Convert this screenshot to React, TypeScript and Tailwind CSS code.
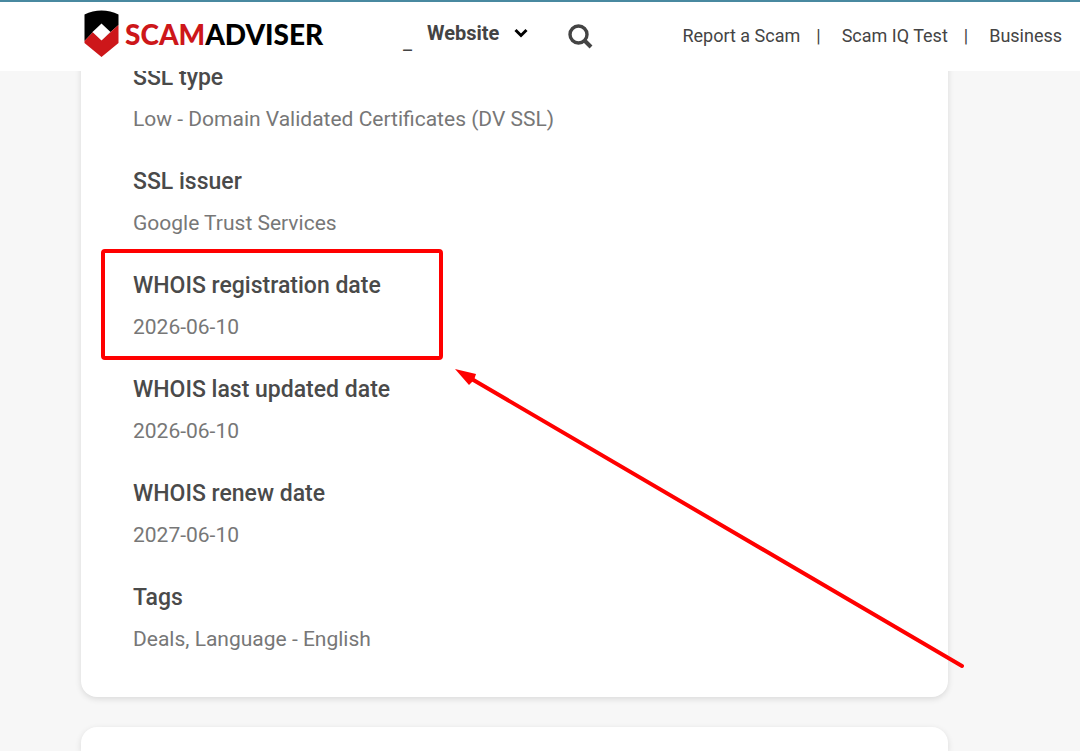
type Detail = { label: string; value: string; highlighted?: boolean };

const DETAILS: Detail[] = [
  { label: 'SSL type', value: 'Low - Domain Validated Certificates (DV SSL)' },
  { label: 'SSL issuer', value: 'Google Trust Services' },
  { label: 'WHOIS registration date', value: '2026-06-10', highlighted: true },
  { label: 'WHOIS last updated date', value: '2026-06-10' },
  { label: 'WHOIS renew date', value: '2027-06-10' },
  { label: 'Tags', value: 'Deals, Language - English' },
];

const LINKS = ['Report a Scam', 'Scam IQ Test', 'Business'];

function Logo() {
  return (
    <a href="#" className="flex shrink-0 items-center gap-1.5">
      <svg width="35" height="47" viewBox="0 0 35 47" aria-hidden="true">
        <path d="M0.5 4.5C11 -1 24 -1 34.5 4.5V15L17.5 30L9 22L0.5 31Z" fill="#000" />
        <path d="M0.5 31L9 22L17.5 30L34.5 15V33L17.5 47L0.5 33Z" fill="#cd171a" />
        <path d="M17.5 13.5L26.5 22L17.5 30.5L8.5 22Z" fill="#fff" />
      </svg>
      <span className="font-[Lato,sans-serif] text-[28px] leading-8 font-black text-black">
        <span className="text-[#cd171a]">SCAM</span>ADVISER
      </span>
    </a>
  );
}

function Header() {
  return (
    <header className="relative z-10 flex h-[71px] items-start overflow-hidden border-t-2 border-[#4889a0] bg-white pl-[84px] text-[#444]">
      <div className="flex w-[319px] shrink-0 pt-2">
        <Logo />
      </div>
      <span className="w-6 shrink-0 pt-[26px] text-xl leading-7">_</span>
      <button type="button" className="flex shrink-0 items-center gap-[15px] pt-[15px] text-xl leading-8 font-bold">
        Website
        <svg width="14" height="10" viewBox="0 0 14 10" fill="none" aria-hidden="true">
          <path d="M1.5 2L7 7.5L12.5 2" stroke="#000" strokeWidth="3" />
        </svg>
      </button>
      <button type="button" aria-label="Search" className="ml-10 shrink-0 pt-[22px]">
        <svg width="25" height="25" viewBox="0 0 25 25" fill="none" stroke="#444" aria-hidden="true">
          <circle cx="10.5" cy="10.5" r="8.5" strokeWidth="3.4" />
          <path d="M16.5 16.5L23 23" strokeWidth="4" />
        </svg>
      </button>
      <nav className="ml-[89px] flex shrink-0 gap-[21px] pt-5 text-lg leading-7">
        {LINKS.map((link, i) => (
          <span key={link} className="flex gap-4 whitespace-nowrap">
            <a href="#">{link}</a>
            {i < LINKS.length - 1 && <span aria-hidden="true">|</span>}
          </span>
        ))}
      </nav>
    </header>
  );
}

function Highlight() {
  return (
    <>
      <div className="absolute -top-[21px] -bottom-[19px] -left-8 w-[342px] rounded-sm border-4 border-[#f00]" />
      <svg
        className="absolute top-[99px] left-[322px] z-10"
        width="510"
        height="300"
        viewBox="0 0 510 300"
        aria-hidden="true"
      >
        <path d="M15 9L507 297" stroke="#f00" strokeWidth="4" strokeLinecap="round" />
        <path d="M0 0L21 5L19 11L14 16Z" fill="#f00" />
      </svg>
    </>
  );
}

export default function App() {
  return (
    <div className="flex min-h-screen flex-col overflow-hidden bg-[#f7f7f7] font-[Roboto,sans-serif]">
      <Header />
      <main className="-mt-12 mr-[132px] ml-[81px] flex grow flex-col gap-[30px]">
        <section className="rounded-2xl bg-white px-[52px] pt-[39px] pb-11 shadow-[0_2px_6px_rgba(0,0,0,0.12)]">
          <dl className="flex flex-col gap-[33px]">
            {DETAILS.map((detail) => (
              <div key={detail.label} className="relative flex flex-col gap-[11px]">
                <dt className="text-[23px] leading-8 font-medium text-[#4a4a4a]">{detail.label}</dt>
                <dd className="text-[21px] leading-7 text-[#777]">{detail.value}</dd>
                {detail.highlighted && <Highlight />}
              </div>
            ))}
          </dl>
        </section>
        <section className="min-h-6 grow rounded-t-2xl bg-white shadow-[0_2px_6px_rgba(0,0,0,0.12)]" />
      </main>
    </div>
  );
}
